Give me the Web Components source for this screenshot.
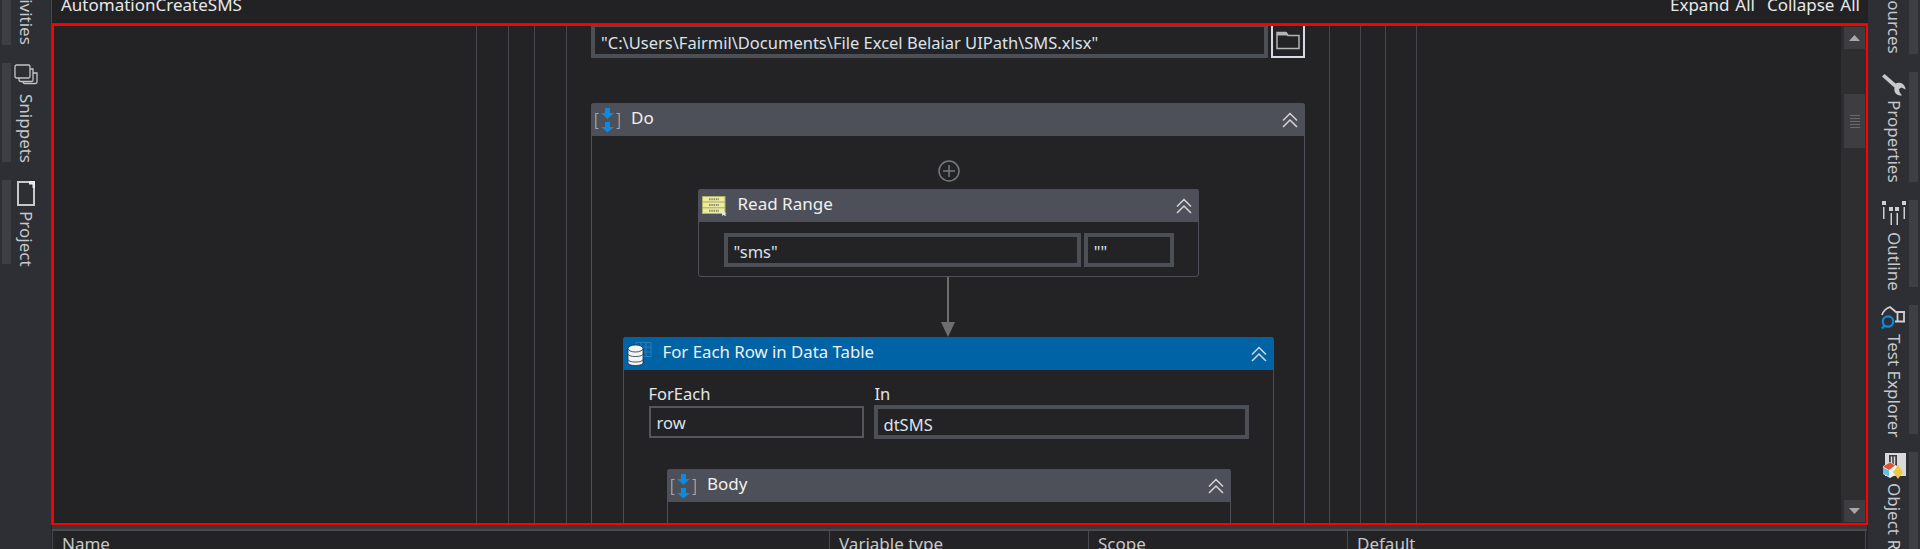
<!DOCTYPE html>
<html><head><meta charset="utf-8">
<style>
html,body{margin:0;padding:0;height:549px;overflow:hidden;background:#232326}
body{font-family:"Noto Sans","Open Sans",sans-serif;color:#e6e6e6}
</style></head><body>
<uip-app>
  <side-rail slot="left" side="left">
    <rail-tab label="Activities" h="45" clip></rail-tab>
    <rail-tab label="Snippets" h="99" icon="snippets" ih="31"></rail-tab>
    <rail-tab label="Project" h="84" icon="project" ih="31"></rail-tab>
  </side-rail>
  <design-panel slot="main" title-text="AutomationCreateSMS">
    <guide-box ml="422" w="941">
     <guide-box ml="31" mr="30">
      <guide-box ml="25" mr="24">
       <guide-box ml="31" mr="30" pad="24">
         <path-field></path-field>
         <wf-activity title-text="Do" icon="seq" top="45" minh="800">
           <add-dot></add-dot>
           <wf-activity title-text="Read Range" icon="xl" w="501" top="7">
             <range-fields></range-fields>
           </wf-activity>
           <wf-connector></wf-connector>
           <wf-activity title-text="For Each Row in Data Table" icon="db" w="651" variant="blue" top="0" tx="36" fs="16.8" minh="400">
             <foreach-fields></foreach-fields>
             <wf-activity title-text="Body" icon="seq" w="564" top="30" nudge="2" minh="100"></wf-activity>
           </wf-activity>
         </wf-activity>
       </guide-box>
      </guide-box>
     </guide-box>
    </guide-box>
  </design-panel>
  <var-table slot="bottom"></var-table>
  <side-rail slot="right" side="right">
    <rail-tab label="Resources" h="54" clip></rail-tab>
    <rail-tab label="Properties" h="110" icon="wrench" ih="28"></rail-tab>
    <rail-tab label="Outline" h="87" icon="outline" ih="32"></rail-tab>
    <rail-tab label="Test Explorer" h="129" icon="test" ih="29"></rail-tab>
    <rail-tab label="Object Repository" h="200" icon="repo" ih="31"></rail-tab>
  </side-rail>
</uip-app>
<script>
const ICONS={
 snippets:`<svg width="25" height="23" viewBox="0 0 25 23" fill="none" stroke="#c4c4c4" stroke-width="1.3"><rect x="1" y="1" width="15" height="13" rx="1.5"/><path d="M16 5h3v11a1.5 1.5 0 0 1-1.5 1.5H7a2 2 0 0 1-2-2V14"/><path d="M19 9h4v9a1.5 1.5 0 0 1-1.5 1.500H11a2 2 0 0 1-2-2"/></svg>`,
 project:`<svg width="19" height="25" viewBox="0 0 19 25"><path d="M1 1h16v23H1z" fill="none" stroke="#c8c8c8" stroke-width="2"/><path d="M12 0h6v7h-2.500V3.500H12z" fill="#ececec"/></svg>`,
 wrench:`<svg width="25" height="24" viewBox="0 0 25 24"><path d="M1 3.500 3.500 1 14.500 10.500c2.500-1.200 6-1 8 1.200 1.300 1.400 2 3 2 4.800l-4-2-2.500 1.500.5 3 2.500 3.500c-3.500.5-6-1-7.200-3.500-.6-1.600-.6-2.800-.2-4.200z" fill="#c8c8c8"/></svg>`,
 outline:`<svg width="25" height="25" viewBox="0 0 25 25" fill="#cfcfcf"><rect x="1" y="0" width="4" height="4"/><rect x="21" y="0" width="4" height="4"/><rect x="8" y="6" width="4" height="4"/><rect x="14" y="6" width="4" height="4"/><rect x="2" y="6" width="1.500" height="12"/><rect x="22.500" y="6" width="1.500" height="12"/><rect x="9.500" y="12" width="1.500" height="12"/><rect x="15.500" y="12" width="1.500" height="12"/></svg>`,
 test:`<svg width="25" height="24" viewBox="0 0 25 24" fill="none"><path d="M1 9Q3 3 9 1L15 6H24M23 5V16M16.500 6V15M14 15.500H24" stroke="#cfcfcf" stroke-width="1.800"/><circle cx="7" cy="15.500" r="5.200" stroke="#0a8ae0" stroke-width="2.200"/><path d="M3.500 19.500 1 22.500" stroke="#0a8ae0" stroke-width="2.200"/></svg>`,
 repo:`<svg width="25" height="26" viewBox="0 0 25 26"><path d="M4 0h21v23H4z" fill="#d8d8d8"/><path d="M8 2h8v11H8z" fill="#3b3d42"/><path d="M10.500 3.500v8M13.500 3.500v8" stroke="#d8d8d8" stroke-width="1.500"/><path d="M2 13l7-4 7 4v8l-7 4-7-4z" fill="#f2f2f2"/><path d="M2 13.500l7-4 5 3-6 4.500z" fill="#e0522a"/><path d="M2 14.500l6 3v6l-6-3z" fill="#62bfe6"/><path d="M17 12l5 7-5 7-5-7z" fill="#f0c840"/></svg>`,
 seq:`<svg width="25" height="24" viewBox="0 0 25 24"><path d="M3.500 5.500H.8v15h2.700M21.500 5.500h2.700v15h-2.700" fill="none" stroke="#a8a8a8" stroke-width="1.200"/><path d="M10 0h5v5h4l-6.500 6L6 5h4zM10 14h5v5h4l-6.500 5.500L6 19h4z" fill="#0a8ae0"/></svg>`,
 xl:`<svg width="26" height="20" viewBox="0 0 26 20"><rect x=".5" y=".5" width="22.500" height="17" fill="#ecec9e" stroke="#b0b068"/><path d="M.5 6h22.500M.5 11.800h22.500" stroke="#a8a860"/><path d="M7 3.200h10M7 9h10M7 14.800h10" stroke="#8a8a78" stroke-width="2" stroke-dasharray="1.500 .8"/><path d="M20 15v5l1.500-1.300L23 20l1-.5-1-2h2z" fill="#e8e8e8"/></svg>`,
 db:`<svg width="25" height="24" viewBox="0 0 25 24"><path d="M9 .5h15v14H9zM9 5h15M14 .5v14M19 .5v14M9 10h15" fill="none" stroke="#2a7dbd"/><g fill="#f4f4f4" stroke="#0b2c44" stroke-width=".8"><path d="M1 18v2.500C1 22.500 4 23.500 8.500 23.500S16 22.500 16 20.500V18z"/><path d="M1 12v5c0 2 3 3 7.500 3S16 19 16 17v-5z"/><path d="M1 7v4.500c0 2 3 3 7.500 3S16 13.500 16 11.500V7z"/><ellipse cx="8.500" cy="6.500" rx="7.500" ry="3.500"/></g></svg>`
};
function comp(name,css,html){
  customElements.define(name,class extends HTMLElement{
    constructor(){super();const r=this.attachShadow({mode:'open'});
      const a=n=>this.getAttribute(n);
      r.innerHTML=`<style>${css(a)}</style>`+html(a);}
  });
}
comp('uip-app',()=>`:host{display:grid;grid-template-columns:51px 1817px 52px;grid-template-rows:525px 24px;width:1920px;height:549px;overflow:hidden;background:#232326}
 ::slotted([slot=left]){grid-row:1/3;grid-column:1}
 ::slotted([slot=main]){grid-row:1;grid-column:2}
 ::slotted([slot=bottom]){grid-row:2;grid-column:2}
 ::slotted([slot=right]){grid-row:1/3;grid-column:3}`,
 ()=>`<slot name="left"></slot><slot name="main"></slot><slot name="bottom"></slot><slot name="right"></slot>`);
comp('side-rail',a=>`:host{display:flex;flex-direction:column;gap:18px;background:#2d2f34;overflow:hidden;height:549px;--dir:${a('side')==='right'?'row-reverse':'row'};--pad:${a('side')==='right'?'0 2px 0 14px':'0 12px 0 2px'};--tx:${a('side')==='right'?'0':'-1px'}}`,()=>`<slot></slot>`);
comp('rail-tab',a=>`:host{display:flex;flex-direction:var(--dir);padding:var(--pad);height:${a('h')}px;flex:none;gap:3px;color:#c6c8cc;font-size:17px}
 .strip{width:9px;background:#3c3f44;flex:none}
 .c{width:25px;flex:none;display:flex;flex-direction:column;align-items:center;justify-content:${a('clip')!==null?'flex-end':'flex-start'};min-height:0}
 .i{height:${a('ih')||0}px;flex:none;display:flex;justify-content:center;align-items:flex-start;padding-top:1px;box-sizing:border-box}
 .t{writing-mode:vertical-rl;white-space:nowrap;line-height:20px;flex:none;margin-left:var(--tx)}`,
 a=>`<div class="strip"></div><div class="c">${a('icon')?`<div class="i">${ICONS[a('icon')]}</div>`:''}<div class="t">${a('label')}</div></div>`);
comp('design-panel',()=>`:host{display:flex;flex-direction:column;height:525px;border-left:1px solid #45474d;box-sizing:border-box;min-width:0}
 .top{height:23px;flex:none;display:flex;justify-content:space-between;border-bottom:1px solid #45474d;font-size:17px;line-height:22px;color:#e8e8e8;overflow:hidden;background:#222225}
 .top span{margin-top:-6px;display:block}
 .l{margin-left:9px}.r{display:flex;gap:12px;margin-right:8px;word-spacing:1.5px}
 .canvas{flex:1;min-height:0;border:2px solid #ff0000;display:flex;overflow:hidden}
 .scroll{flex:1;min-width:0;overflow:hidden}`,
 a=>`<div class="top"><span class="l">${a('title-text')}</span><div class="r"><span>Expand All</span><span>Collapse All</span></div></div>
 <div class="canvas"><div class="scroll"><slot></slot></div><v-scroll></v-scroll></div>`);
comp('guide-box',a=>`:host{display:block;box-sizing:border-box;border-inline:1px solid #47494f;height:1200px;margin-left:${a('ml')||0}px;margin-right:${a('mr')||0}px;${a('w')?`width:${a('w')}px;`:''}padding-inline:${a('pad')||0}px}`,()=>`<slot></slot>`);
comp('v-scroll',()=>`:host{display:flex;flex-direction:column;width:25px;flex:none;background:#2e2e31;box-sizing:border-box;padding:1px 1px 1px 3px}
 .b{height:22px;background:#3e3e42;display:flex;align-items:center;justify-content:center;flex:none}
 .th{height:54px;margin-top:45px;background:#3e3e42;display:flex;flex-direction:column;gap:2px;align-items:center;justify-content:center;flex:none}
 .th i{display:block;width:10px;height:1px;background:#6a6a6e}.sp{flex:1}`,
 ()=>`<div class="b"><svg width="11" height="6"><path d="M0 6 5.500 0 11 6z" fill="#a8a8a8"/></svg></div><div class="th"><i></i><i></i><i></i><i></i><i></i></div><div class="sp"></div><div class="b"><svg width="11" height="6"><path d="M0 0h11L5.500 6z" fill="#a8a8a8"/></svg></div>`);
comp('path-field',()=>`:host{display:flex;gap:3px;height:32px}
 .f{flex:1;border:solid #4d4f57;border-width:1px 4px 4px 4px;color:#dce2ea;font-size:16.5px;line-height:31px;height:27px;padding-left:6px;white-space:nowrap;overflow:hidden}
 .b{width:30px;border:solid #d5dae5;border-width:0 2px 2px 2px;flex:none;display:flex;justify-content:center;padding-top:5px;height:25px}`,
 ()=>`<div class="f">"C:\\Users\\Fairmil\\Documents\\File Excel Belaiar UIPath\\SMS.xlsx"</div><div class="b"><svg width="24" height="19" viewBox="0 0 24 19" fill="none"><path d="M1 17.500V1.500h9l2 3h11v13z" stroke="#b4b4b4" stroke-width="1.500"/><path d="M1 1h9.500l2 3.500H1z" fill="#b4b4b4"/></svg></div>`);
comp('wf-activity',a=>{const blue=a('variant')==='blue';const w=a('w');
 return `:host{display:block;box-sizing:border-box;flex:none;margin-top:${a('top')||0}px;${a('nudge')?`margin-left:${a('nudge')}px;`:''}${w?`width:${w}px;`:''}${a('minh')?`min-height:${a('minh')}px;`:''}border:1px solid ${blue?'#0063a5':'#4d5058'};border-radius:3px}
 .h{height:33px;margin:-1px -1px 0;background:${blue?'#0063a5':'#4d5058'};border-radius:3px 3px 0 0;display:flex;align-items:center;color:#f0f0f0;font-size:${a('fs')||17}px;padding:0 7px 0 4px;line-height:30px}
 .ic{width:${(a('tx')?+a('tx'):36)}px;flex:none;display:flex}
 .tt{flex:1;white-space:nowrap;margin-top:-3px}
 .body{display:flex;flex-direction:column;align-items:center}`},
 a=>`<div class="h"><span class="ic">${ICONS[a('icon')]}</span><span class="tt">${a('title-text')}</span><svg width="16" height="16" viewBox="0 0 16 16" fill="none" stroke="#d6d6d6" stroke-width="1.500"><path d="M1 8.500 8 1.500l7 7M1 15 8 8l7 7"/></svg></div><div class="body"><slot></slot></div>`);
comp('add-dot',()=>`:host{display:block;width:22px;height:22px;margin:24px 0 0 2px;flex:none}`,()=>`<svg width="22" height="22" viewBox="0 0 22 22" fill="none" stroke="#77797d" stroke-width="1.500"><circle cx="11" cy="11" r="10"/><path d="M11 5v12M5 11h12"/></svg>`);
comp('range-fields',()=>`:host{display:flex;gap:3px;align-self:stretch;padding:11px 24px 9px 25px}
 .f{box-sizing:border-box;height:34px;border:4px solid #4d4f57;color:#dce2ea;font-size:16.5px;line-height:29px;padding-left:6px}
 .a{width:358px}.b{width:90px}`,()=>`<div class="f a">"sms"</div><div class="f b">""</div>`);
comp('wf-connector',()=>`:host{display:block;height:60px;width:14px;flex:none}`,()=>`<svg width="14" height="60" viewBox="0 0 14 60" style="display:block"><path d="M7 0v46" stroke="#6e6e6e" stroke-width="2"/><path d="M0 45h14L7 60z" fill="#6e6e6e"/></svg>`);
comp('foreach-fields',()=>`:host{display:grid;grid-template-columns:215px 375px;column-gap:10px;align-self:stretch;padding:14px 0 0 25px;color:#e6e6e6;font-size:16.5px}
 label{line-height:20px;height:22px;display:block}
 label+label{padding-left:1px}
 .f{box-sizing:border-box;height:32px;border:2px solid #55575c;padding-left:6px;line-height:30px;color:#dce2ea}
 .g{box-sizing:border-box;height:34px;margin-top:-1px;border:4px solid #4d4f57;padding-left:6px;line-height:32px;color:#dce2ea}`,
 ()=>`<label>ForEach</label><label>In</label><div class="f">row</div><div class="g">dtSMS</div>`);
comp('var-table',()=>`:host{display:block;height:24px;overflow:hidden;box-sizing:border-box;margin-inline:1px;background:#232326}
 .band{height:4px;background:#38383b}
 .line{height:2px;background:#4a4b50}
 .row{display:grid;grid-template-columns:777px 259px 259px 1fr;height:40px;margin:0 1px 0 0;border-inline:1px solid #4a4b50;font-size:17px;color:#c8c8c8}
 .row div{border-right:1px solid #4a4b50;padding:0 0 0 9px;line-height:26px}.row div:last-child{border:0}`,
 ()=>`<div class="band"></div><div class="line"></div><div class="row"><div>Name</div><div>Variable type</div><div>Scope</div><div>Default</div></div>`);
</script>
</body></html>
